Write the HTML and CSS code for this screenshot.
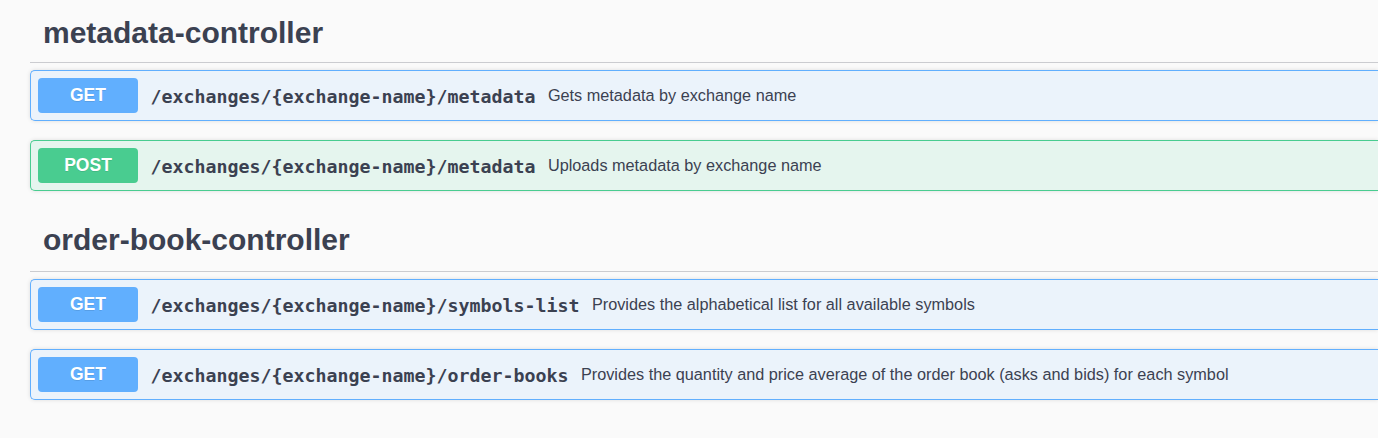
FILE: index.html
```html
<!DOCTYPE html>
<html lang="en">
<head>
<meta charset="utf-8">
<title>Swagger UI</title>
<link rel="stylesheet" href="styles.css">
</head>
<body>
<div class="page">
  <section class="tag-section">
    <h3 class="tag tag-first">metadata-controller</h3>
    <div class="opblock opblock-get">
      <span class="method">GET</span>
      <span class="path">/exchanges/{exchange-name}/metadata</span>
      <span class="desc">Gets metadata by exchange name</span>
    </div>
    <div class="opblock opblock-post">
      <span class="method">POST</span>
      <span class="path">/exchanges/{exchange-name}/metadata</span>
      <span class="desc">Uploads metadata by exchange name</span>
    </div>
  </section>
  <section class="tag-section">
    <h3 class="tag tag-second">order-book-controller</h3>
    <div class="opblock opblock-get">
      <span class="method">GET</span>
      <span class="path">/exchanges/{exchange-name}/symbols-list</span>
      <span class="desc">Provides the alphabetical list for all available symbols</span>
    </div>
    <div class="opblock opblock-get">
      <span class="method">GET</span>
      <span class="path">/exchanges/{exchange-name}/order-books</span>
      <span class="desc">Provides the quantity and price average of the order book (asks and bids) for each symbol</span>
    </div>
  </section>
</div>
</body>
</html>
```
FILE: styles.css
```css
html, body {
  margin: 0;
  padding: 0;
  background: #fafafa;
  overflow: hidden;
}

.page {
  padding-left: 30px;
  font-family: "Liberation Sans", Arial, sans-serif;
  color: #3b4151;
}

.tag {
  margin: 0 0 7px 0;
  font-family: "Liberation Sans", Arial, sans-serif;
  font-size: 30px;
  font-weight: 700;
  line-height: 34px;
  color: #3b4151;
  padding-left: 13px;
  border-bottom: 1px solid #cbccd0;
}

.tag-first {
  padding-top: 16px;
  padding-bottom: 12px;
}

.tag-second {
  padding-top: 13px;
  padding-bottom: 14px;
}

.opblock {
  display: flex;
  align-items: center;
  height: 49px;
  padding: 0 7px;
  margin-bottom: 19px;
  border: 1px solid #61affe;
  border-right-width: 0;
  border-radius: 5px 0 0 5px;
  background: #ebf3fb;
  box-shadow: 0 0 4px rgba(0, 0, 0, 0.12);
}

.opblock-post {
  border-color: #49cc90;
  background: #e5f5ee;
}

.method {
  flex: none;
  width: 100px;
  height: 35px;
  display: flex;
  align-items: center;
  justify-content: center;
  border-radius: 4px;
  background: #61affe;
  color: #ffffff;
  font-family: "Liberation Sans", Arial, sans-serif;
  font-size: 17.5px;
  font-weight: 700;
  text-shadow: 0 1px 0 rgba(0, 0, 0, 0.1);
}

.opblock-post .method {
  background: #49cc90;
}

.path {
  flex: none;
  margin-left: 12.5px;
  padding-top: 2px;
  font-family: "DejaVu Sans Mono", "Liberation Mono", monospace;
  font-size: 18.27px;
  font-weight: 700;
  color: #3b4151;
  white-space: nowrap;
}

.desc {
  margin-left: 12.5px;
  font-family: "Liberation Sans", Arial, sans-serif;
  font-size: 16.25px;
  color: #3b4151;
  white-space: nowrap;
}
```
